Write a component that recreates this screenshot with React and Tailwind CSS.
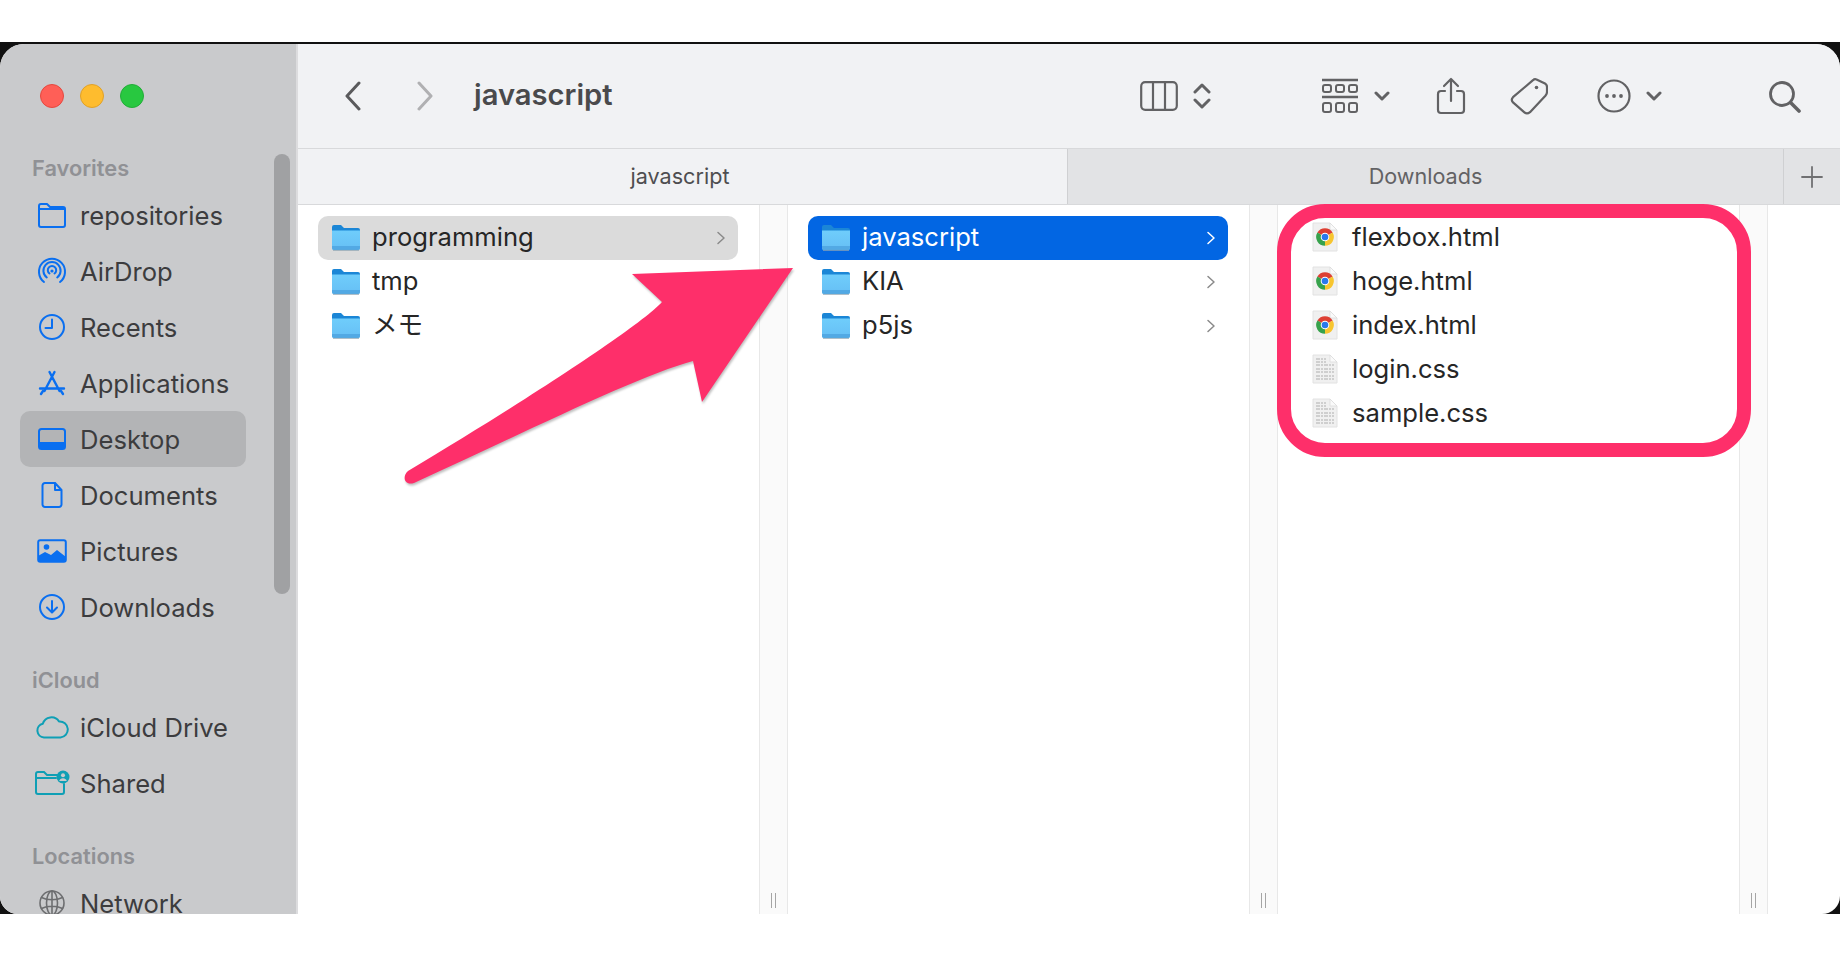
import React from 'react';

const stroke = { fill: 'none', stroke: 'currentColor', strokeLinecap: 'round', strokeLinejoin: 'round' };

function Icon({ w, h, vw, vh, className = '', sw = 2, children }) {
  return (
    <svg width={w} height={h} viewBox={`0 0 ${vw || w} ${vh || h}`} className={`block shrink-0 ${className}`} {...stroke} strokeWidth={sw}>
      {children}
    </svg>
  );
}

const sideIcons = {
  folder: (
    <Icon w={30} h={26}>
      <path d="M2 7V4a2 2 0 0 1 2-2h6l3 3h13a2 2 0 0 1 2 2v16a2 2 0 0 1-2 2H4a2 2 0 0 1-2-2V7h26" />
    </Icon>
  ),
  airdrop: (
    <Icon w={30} h={28}>
      <path d="M7 25a13 13 0 1 1 16 0" />
      <path d="M9.8 20.5a8.6 8.6 0 1 1 10.4 0" />
      <path d="M12.5 16.5a4.2 4.2 0 1 1 5 0" />
      <circle cx="15" cy="14" r="1.6" fill="currentColor" stroke="none" />
    </Icon>
  ),
  clock: (
    <Icon w={28} h={28}>
      <circle cx="14" cy="14" r="12" />
      <path d="M14 6.5V15H7.5" />
    </Icon>
  ),
  apps: (
    <Icon w={28} h={28} sw={2.4}>
      <path d="M16.5 3 6.5 22M11.5 3l10 19M2 19.5h24M3 25l2-3M25 25l-2-3" />
    </Icon>
  ),
  desktop: (
    <Icon w={30} h={24}>
      <rect x="2" y="2" width="26" height="20" rx="2.5" />
      <rect x="3" y="15" width="24" height="6" fill="currentColor" stroke="none" />
    </Icon>
  ),
  doc: (
    <Icon w={24} h={28}>
      <path d="M15 2H5a2.5 2.5 0 0 0-2.5 2.5v19A2.5 2.5 0 0 0 5 26h14a2.5 2.5 0 0 0 2.5-2.5V9L15 2v7h6.5" />
    </Icon>
  ),
  pictures: (
    <svg width="30" height="24" viewBox="0 0 30 24" className="block shrink-0">
      <rect x="1.2" y="1.2" width="27.6" height="21.6" rx="2" fill="none" stroke="currentColor" strokeWidth="2" />
      <circle cx="9.5" cy="8" r="2.8" fill="currentColor" />
      <path d="M1 22v-5l7-4 6 3 6-5 9 7v4a1 1 0 0 1-1 1H2a1 1 0 0 1-1-1z" fill="currentColor" />
    </svg>
  ),
  download: (
    <Icon w={28} h={28}>
      <circle cx="14" cy="14" r="12" />
      <path d="M14 8v11M9 14.5l5 5 5-5" />
    </Icon>
  ),
  cloud: (
    <Icon w={34} h={24}>
      <path d="M9 22.5a7 7 0 0 1-1.2-13.8A9 9 0 0 1 24 6.5a8 8 0 0 1 1.5 16z" />
    </Icon>
  ),
  shared: (
    <svg width="36" height="26" viewBox="0 0 36 26" className="block shrink-0">
      <path d="M2 8V4a2 2 0 0 1 2-2h6l3 3h11M2 8h20M2 8v14a2 2 0 0 0 2 2h24a2 2 0 0 0 2-2v-8" fill="none" stroke="currentColor" strokeWidth="2" strokeLinecap="round" />
      <circle cx="29" cy="7" r="6.5" fill="currentColor" />
      <circle cx="29" cy="5.2" r="2" fill="#c9cacc" />
      <path d="M25.2 11a4 4 0 0 1 7.6 0z" fill="#c9cacc" />
    </svg>
  ),
  network: (
    <Icon w={28} h={28} sw={1.6}>
      <circle cx="14" cy="14" r="12" />
      <ellipse cx="14" cy="14" rx="5.5" ry="12" />
      <path d="M3.5 8.5c6 3 15 3 21 0M3.5 19.5c6-3 15-3 21 0M14 2v24" />
    </Icon>
  ),
};

function SideHeading({ children, first }) {
  return (
    <div className={`flex h-[39px] items-center pl-8 pt-[2px] text-[21.8px] font-semibold text-[#909195] ${first ? '' : 'mt-[25px]'}`}>
      {children}
    </div>
  );
}

function SideRow({ icon, label, active, tint = 'text-[#0a6ff0]', dim }) {
  return (
    <div className={`ml-5 mr-[50px] flex h-14 items-center rounded-[10px] pl-3 ${active ? 'bg-[#b3b4b6]' : ''}`}>
      <div className={`flex h-10 w-10 items-center justify-center ${dim ? 'text-[#6d6e70]' : tint}`}>{sideIcons[icon]}</div>
      <span className="ml-2 translate-y-px text-[25.6px] text-[#3c3c3e]">{label}</span>
    </div>
  );
}

function Folder() {
  return (
    <svg width="28" height="28" viewBox="0 0 28 28" className="block shrink-0 -translate-y-px">
      <defs>
        <linearGradient id="fold" x1="0" y1="0" x2="0" y2="1">
          <stop offset="0" stopColor="#6fcdfb" />
          <stop offset="1" stopColor="#66bff5" />
        </linearGradient>
      </defs>
      <path d="M0 4a2 2 0 0 1 2-2h7l3 3h14a2 2 0 0 1 2 2v5H0z" fill="#1b86d6" />
      <path d="M0 7.5h28V25a2 2 0 0 1-2 2H2a2 2 0 0 1-2-2z" fill="url(#fold)" />
      <path d="M0 23h28v2a2 2 0 0 1-2 2H2a2 2 0 0 1-2-2z" fill="#52a9e4" />
      <path d="M1 27.4h26" stroke="#8fa4b4" strokeWidth="0.8" />
    </svg>
  );
}

function FileSheet({ children }) {
  return (
    <svg width="26" height="30" viewBox="0 0 26 30" className="block shrink-0 -translate-y-px">
      <path d="M1 1h17l7 7v21H1z" fill="#f0f0f0" stroke="#e2e2e2" strokeWidth="1" />
      <path d="M18 1v7h7z" fill="#fafafa" stroke="#dcdcdc" strokeWidth="0.8" />
      {children}
    </svg>
  );
}

function ChromeFile() {
  return (
    <FileSheet>
      <g transform="translate(-0.2 1.8) scale(1.1)">
        <path d="M12 12 5.07 8A8 8 0 0 1 18.93 8z" fill="#dd3f33" />
        <path d="M12 12 18.93 8A8 8 0 0 1 12 20z" fill="#f7c52f" />
        <path d="M12 12v8A8 8 0 0 1 5.07 8z" fill="#37a24c" />
        <circle cx="12" cy="12" r="3.9" fill="#fff" />
        <circle cx="12" cy="12" r="3" fill="#2a79ec" />
      </g>
    </FileSheet>
  );
}

const textLines = [5, 8, 11, 15, 18, 22, 25];

function TextFile() {
  return (
    <FileSheet>
      {textLines.map((y) => (
        <path key={y} d={`M4 ${y}h${y < 9 ? 10 : 18}`} stroke="#c4c4c4" strokeWidth="1.5" strokeDasharray="4 1 2 1" />
      ))}
    </FileSheet>
  );
}

function ColumnRow({ icon, label, chevron, state }) {
  const bg = state === 'blue' ? 'bg-[#0266e3] text-white' : state === 'gray' ? 'bg-[#dbdbdb] text-[#262626]' : 'text-[#262626]';
  return (
    <div className={`flex h-11 items-center rounded-[10px] pl-[14px] pr-3 ${bg}`}>
      {icon}
      <span className="ml-[12px] flex-1 -translate-y-px text-[25.6px]">{label}</span>
      {chevron && (
        <svg width="10" height="14" viewBox="0 0 10 14" className={`block shrink-0 ${state === 'blue' ? 'text-white' : 'text-[#8a8a8a]'}`} {...stroke} strokeWidth="1.5">
          <path d="M2 1.5 8 7l-6 5.5" />
        </svg>
      )}
    </div>
  );
}

function Divider() {
  return (
    <div className="flex w-[29px] shrink-0 items-end justify-center border-x border-[#e8e8e8] bg-[#fafafa] pb-[6px]">
      <div className="h-[15px] w-[5px] border-x border-[#a5a5a5]" />
    </div>
  );
}

function Column({ children }) {
  return <div className="flex w-[461px] shrink-0 flex-col pl-[20px] pr-[21px] pt-[11px]">{children}</div>;
}

export default function App() {
  return (
    <div className="relative flex h-[956px] w-[1840px] flex-col overflow-hidden bg-white font-['Inter','Noto_Sans_CJK_JP',sans-serif] antialiased">
      <div className="h-[42px] shrink-0" />
      <div className="min-h-0 flex-1 bg-[#111] pt-[2px]">
        <div className="flex h-full overflow-hidden rounded-t-[24px] rounded-b-[18px] bg-white">
          {/* sidebar */}
          <aside className="relative w-[298px] shrink-0 overflow-hidden border-r-2 border-[#dcdcde] bg-[#c9cacc]">
            <div className="flex gap-4 pl-10 pt-10">
              <div className="h-6 w-6 rounded-full border border-[#e5483f] bg-[#ff5f57]" />
              <div className="h-6 w-6 rounded-full border border-[#e0a128] bg-[#febc2e]" />
              <div className="h-6 w-6 rounded-full border border-[#22ad38] bg-[#28c840]" />
            </div>
            <div className="pt-[40px]">
              <SideHeading first>Favorites</SideHeading>
              <SideRow icon="folder" label="repositories" />
              <SideRow icon="airdrop" label="AirDrop" />
              <SideRow icon="clock" label="Recents" />
              <SideRow icon="apps" label="Applications" />
              <SideRow icon="desktop" label="Desktop" active />
              <SideRow icon="doc" label="Documents" />
              <SideRow icon="pictures" label="Pictures" />
              <SideRow icon="download" label="Downloads" />
              <SideHeading>iCloud</SideHeading>
              <SideRow icon="cloud" label="iCloud Drive" tint="text-[#0f9fb5]" />
              <SideRow icon="shared" label="Shared" tint="text-[#0f9fb5]" />
              <SideHeading>Locations</SideHeading>
              <SideRow icon="network" label="Network" dim />
            </div>
            <div className="absolute left-[274px] top-[110px] h-[440px] w-4 rounded-full bg-[#a0a1a3]" />
          </aside>

          <main className="flex min-w-0 flex-1 flex-col">
            {/* toolbar */}
            <div className="flex h-[104px] shrink-0 items-center bg-[#f1f2f4] text-[#626264]">
              <Icon w={18} h={30} className="ml-[46px] text-[#5a5a5c]" sw={3}>
                <path d="M15 2 3 15l12 13" />
              </Icon>
              <Icon w={18} h={30} className="ml-[54px] text-[#b0b0b2]" sw={3}>
                <path d="M3 2l12 13L3 28" />
              </Icon>
              <span className="ml-[40px] -translate-y-px text-[29.2px] font-semibold text-[#4a4a4c]">javascript</span>
              <div className="flex-1" />
              <Icon w={38} h={30}>
                <rect x="1.2" y="1.2" width="35.6" height="27.6" rx="4" strokeWidth="2.2" />
                <path d="M13 1.5v27M25 1.5v27" strokeWidth="2.2" />
              </Icon>
              <Icon w={18} h={28} className="ml-[15px]" sw={3}>
                <path d="M2 10l7-7 7 7M2 18l7 7 7-7" />
              </Icon>
              <Icon w={38} h={36} className="ml-[110px]" sw={2}>
                <path d="M1 2h36M1 19h36" strokeWidth="2.6" strokeLinecap="butt" />
                <rect x="2" y="7" width="8" height="7" rx="2" />
                <rect x="15" y="7" width="8" height="7" rx="2" />
                <rect x="28" y="7" width="8" height="7" rx="2" />
                <rect x="2" y="25" width="8" height="9" rx="2" />
                <rect x="15" y="25" width="8" height="9" rx="2" />
                <rect x="28" y="25" width="8" height="9" rx="2" />
              </Icon>
              <Icon w={16} h={10} className="ml-[15px]" sw={3}>
                <path d="M2 2l6 6 6-6" />
              </Icon>
              <Icon w={30} h={38} className="ml-[46px]" sw={2.2}>
                <path d="M15 24V2M8 9l7-7 7 7" />
                <path d="M9 14H5a3 3 0 0 0-3 3v16a3 3 0 0 0 3 3h20a3 3 0 0 0 3-3V17a3 3 0 0 0-3-3h-4" />
              </Icon>
              <Icon w={38} h={38} className="ml-[44px]" sw={2.2}>
                <path d="M23 3.2Q24.5 1.6 26.5 2.4L35 6.5Q37 7.6 37 10V15Q37 17 35.4 18.8L20 35.2Q17 37.6 14.4 35.4L3 25.4Q0.6 22.8 3 20.2Z" />
                <circle cx="26.5" cy="10.5" r="1.8" fill="currentColor" stroke="none" />
              </Icon>
              <Icon w={34} h={34} className="ml-[49px]" sw={2.2}>
                <circle cx="17" cy="17" r="15.5" />
                <circle cx="10" cy="17" r="1.9" fill="currentColor" stroke="none" />
                <circle cx="17" cy="17" r="1.9" fill="currentColor" stroke="none" />
                <circle cx="24" cy="17" r="1.9" fill="currentColor" stroke="none" />
              </Icon>
              <Icon w={16} h={10} className="ml-[15px]" sw={3}>
                <path d="M2 2l6 6 6-6" />
              </Icon>
              <Icon w={33} h={33} className="ml-[106px] mr-[39px]" sw={2.8}>
                <circle cx="14" cy="14" r="11.5" />
                <path d="M22.5 22.5 31 31" strokeWidth="3.6" />
              </Icon>
            </div>

            {/* tabs */}
            <div className="flex h-[57px] shrink-0 border-y border-[#d8d9db] text-[21.6px]">
              <div className="flex w-[769px] items-center justify-center bg-[#f1f2f4] pr-[5px] text-[#4e4e50]">javascript</div>
              <div className="flex flex-1 items-center justify-center border-x border-[#cfd0d2] bg-[#e2e3e5] text-[#626264]">Downloads</div>
              <div className="flex w-[56px] items-center justify-center bg-[#e2e3e5] text-[#707072]">
                <Icon w={22} h={22} sw={1.8}>
                  <path d="M11 1v20M1 11h20" />
                </Icon>
              </div>
            </div>

            {/* columns */}
            <div className="flex min-h-0 flex-1">
              <Column>
                <ColumnRow icon={<Folder />} label="programming" chevron state="gray" />
                <ColumnRow icon={<Folder />} label="tmp" />
                <ColumnRow icon={<Folder />} label="メモ" />
              </Column>
              <Divider />
              <Column>
                <ColumnRow icon={<Folder />} label="javascript" chevron state="blue" />
                <ColumnRow icon={<Folder />} label="KIA" chevron />
                <ColumnRow icon={<Folder />} label="p5js" chevron />
              </Column>
              <Divider />
              <div className="flex w-[461px] shrink-0 flex-col pl-[34px] pt-[11px]">
                {[
                  ['flexbox.html', <ChromeFile />],
                  ['hoge.html', <ChromeFile />],
                  ['index.html', <ChromeFile />],
                  ['login.css', <TextFile />],
                  ['sample.css', <TextFile />],
                ].map(([name, icon]) => (
                  <div key={name} className="flex h-11 items-center">
                    {icon}
                    <span className="ml-[14px] -translate-y-px text-[25.6px] text-[#262626]">{name}</span>
                  </div>
                ))}
              </div>
              <Divider />
            </div>
          </main>
        </div>
      </div>
      <div className="h-[42px] shrink-0" />

      {/* annotations on top of the screenshot */}
      <div className="absolute left-[1277px] top-[204px] h-[253px] w-[474px] rounded-[48px] border-[14px] border-[#fe2f6a]" />
      <svg width="1840" height="956" viewBox="0 0 1840 956" className="pointer-events-none absolute left-0 top-0 drop-shadow-[1px_2px_1px_rgba(0,0,0,0.25)]">
        <path
          d="M793 268 632 274 662 302C640 326 530 398 408 471 402 476 404 486 414 483 530 430 640 375 693 361L702 402Z"
          fill="#fe2f6a"
        />
      </svg>
    </div>
  );
}
